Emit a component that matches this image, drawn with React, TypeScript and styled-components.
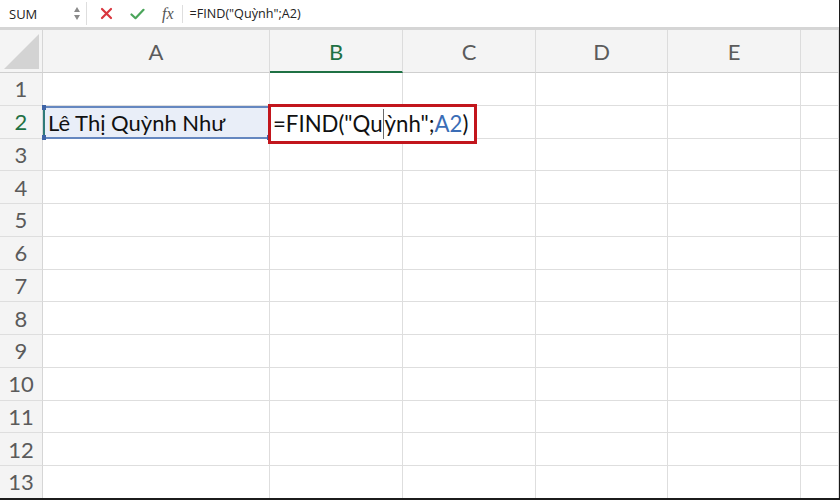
import { Fragment } from "react";
import styled, { createGlobalStyle } from "styled-components";

const GlobalStyle = createGlobalStyle`
  html, body {
    margin: 0;
    padding: 0;
    background: #ffffff;
  }
  body {
    font-family: Lato, "Noto Sans", sans-serif;
  }
`;

const Window = styled.div`
  width: 840px;
  height: 500px;
  box-sizing: border-box;
  overflow: hidden;
  display: flex;
  flex-direction: column;
  background: #ffffff;
  border-right: 1px solid #1c1c1c;
  border-bottom: 2px solid #1c1c1c;
`;

const FormulaBar = styled.div`
  flex-shrink: 0;
  height: 27px;
  display: flex;
  align-items: center;
  background: #ffffff;
  border-bottom: 3px solid #d5d5d5;
`;

const NameBox = styled.div`
  width: 87px;
  height: 23px;
  box-sizing: border-box;
  display: flex;
  align-items: center;
  justify-content: space-between;
  padding: 0 6px 0 9px;
  border-right: 1px solid #dedede;
  font-family: "Open Sans", sans-serif;
  font-size: 13px;
  color: #222222;
`;

const Spinner = styled.div`
  display: flex;
  flex-direction: column;
  gap: 3px;
`;

const Arrow = styled.span<{ down?: boolean }>`
  width: 0;
  height: 0;
  border-left: 3.5px solid transparent;
  border-right: 3.5px solid transparent;
  ${({ down }) =>
    down ? "border-top: 5px solid #8a8a8a;" : "border-bottom: 5px solid #8a8a8a;"}
`;

const Actions = styled.div`
  display: flex;
  align-items: center;
  gap: 17px;
  padding: 0 8px 0 13px;
  height: 18px;
  border-right: 1px solid #dedede;
`;

const Fx = styled.span`
  font-family: "Liberation Serif", serif;
  font-style: italic;
  font-size: 16px;
  color: #555555;
  line-height: 1;
`;

const FormulaText = styled.div`
  padding-left: 7px;
  font-family: "Open Sans", sans-serif;
  font-size: 12.6px;
  color: #222222;
`;

const Sheet = styled.div`
  flex: 1;
  display: grid;
  grid-template-columns: 43px 227px 133px 133px 132px 133px 1fr;
  grid-template-rows: 43px repeat(13, 32.75px);
`;

const Corner = styled.div`
  position: relative;
  background: #f4f4f4;
  border-right: 1px solid #d6d6d6;
  border-bottom: 1px solid #cfcfcf;
`;

const SelectAll = styled.div`
  position: absolute;
  right: 3px;
  bottom: 3px;
  width: 35px;
  height: 35px;
  background: #d3d3d3;
  clip-path: polygon(100% 0, 100% 100%, 0 100%);
`;

const ColHeader = styled.div<{ active?: boolean }>`
  display: flex;
  align-items: center;
  justify-content: center;
  background: #f4f4f4;
  border-right: 1px solid #dcdcdc;
  border-bottom: ${({ active }) => (active ? "2px solid #1f7144" : "1px solid #cfcfcf")};
  font-size: 22px;
  color: ${({ active }) => (active ? "#1f7144" : "#5b5b5b")};
  padding-top: ${({ active }) => (active ? "1px" : "0")};
`;

const RowHeader = styled.div<{ active?: boolean }>`
  display: flex;
  align-items: center;
  justify-content: center;
  background: #f4f4f4;
  border-right: 1px solid #d6d6d6;
  border-bottom: 1px solid #dedede;
  font-size: 22px;
  color: ${({ active }) => (active ? "#1f7144" : "#5b5b5b")};
`;

const Cell = styled.div<{ reference?: boolean }>`
  position: relative;
  display: flex;
  align-items: center;
  box-sizing: border-box;
  border-right: 1px solid #dedede;
  border-bottom: 1px solid #dedede;
  font-size: 22px;
  color: #111111;
  padding-left: 4px;
  white-space: nowrap;
  ${({ reference }) =>
    reference &&
    `
    background: #e9eef8;
    border: 2px solid #6587c0;
    border-left-color: #2f7a78;
    padding-left: 3px;
  `}
`;

const Handle = styled.span<{ top?: boolean; left?: boolean }>`
  position: absolute;
  width: 4px;
  height: 5px;
  background: #3f64a6;
  ${({ top }) => (top ? "top: -3px;" : "bottom: -3px;")}
  ${({ left }) => (left ? "left: -3px;" : "right: -3px;")}
`;

const Editor = styled.div`
  position: absolute;
  left: -2px;
  top: -2px;
  width: 209px;
  height: 40px;
  box-sizing: border-box;
  display: flex;
  align-items: center;
  padding-left: 2px;
  background: #ffffff;
  border: 3px solid #c2161d;
  font-size: 22.2px;
  color: #111111;
  z-index: 2;
`;

const Caret = styled.span`
  display: inline-block;
  width: 1px;
  height: 30px;
  margin: 0 0.5px;
  background: #6a6a6a;
  vertical-align: middle;
`;

const RefText = styled.span`
  color: #3b6db6;
`;

const columns = ["A", "B", "C", "D", "E", ""];
const rows = Array.from({ length: 13 }, (_, i) => i + 1);

function CancelIcon() {
  return (
    <svg width="13" height="13" viewBox="0 0 13 13">
      <path d="M2 2 L11 11 M11 2 L2 11" stroke="#d9363e" strokeWidth="2.2" strokeLinecap="round" />
    </svg>
  );
}

function ConfirmIcon() {
  return (
    <svg width="15" height="12" viewBox="0 0 15 12">
      <path
        d="M1.5 6.5 L5.5 10.2 L13.5 1.8"
        stroke="#4aa55a"
        strokeWidth="2.2"
        fill="none"
        strokeLinecap="round"
        strokeLinejoin="round"
      />
    </svg>
  );
}

export default function App() {
  return (
    <>
      <GlobalStyle />
      <Window>
        <FormulaBar>
          <NameBox>
            SUM
            <Spinner>
              <Arrow />
              <Arrow down />
            </Spinner>
          </NameBox>
          <Actions>
            <CancelIcon />
            <ConfirmIcon />
            <Fx>fx</Fx>
          </Actions>
          <FormulaText>=FIND("Quỳnh";A2)</FormulaText>
        </FormulaBar>

        <Sheet>
          <Corner>
            <SelectAll />
          </Corner>
          {columns.map((c, i) => (
            <ColHeader key={`h${i}`} active={c === "B"}>
              {c}
            </ColHeader>
          ))}

          {rows.map((r) => (
            <Fragment key={`r${r}`}>
              <RowHeader active={r === 2}>{r}</RowHeader>
              {columns.map((c, i) => {
                if (r === 2 && c === "A") {
                  return (
                    <Cell key={i} reference>
                      Lê Thị Quỳnh Như
                      <Handle top left />
                      <Handle left />
                      <Handle />
                    </Cell>
                  );
                }
                if (r === 2 && c === "B") {
                  return (
                    <Cell key={i}>
                      <Editor>
                        =FIND("Qu<Caret />ỳnh";<RefText>A2</RefText>)
                      </Editor>
                    </Cell>
                  );
                }
                return <Cell key={i} />;
              })}
            </Fragment>
          ))}
        </Sheet>
      </Window>
    </>
  );
}
